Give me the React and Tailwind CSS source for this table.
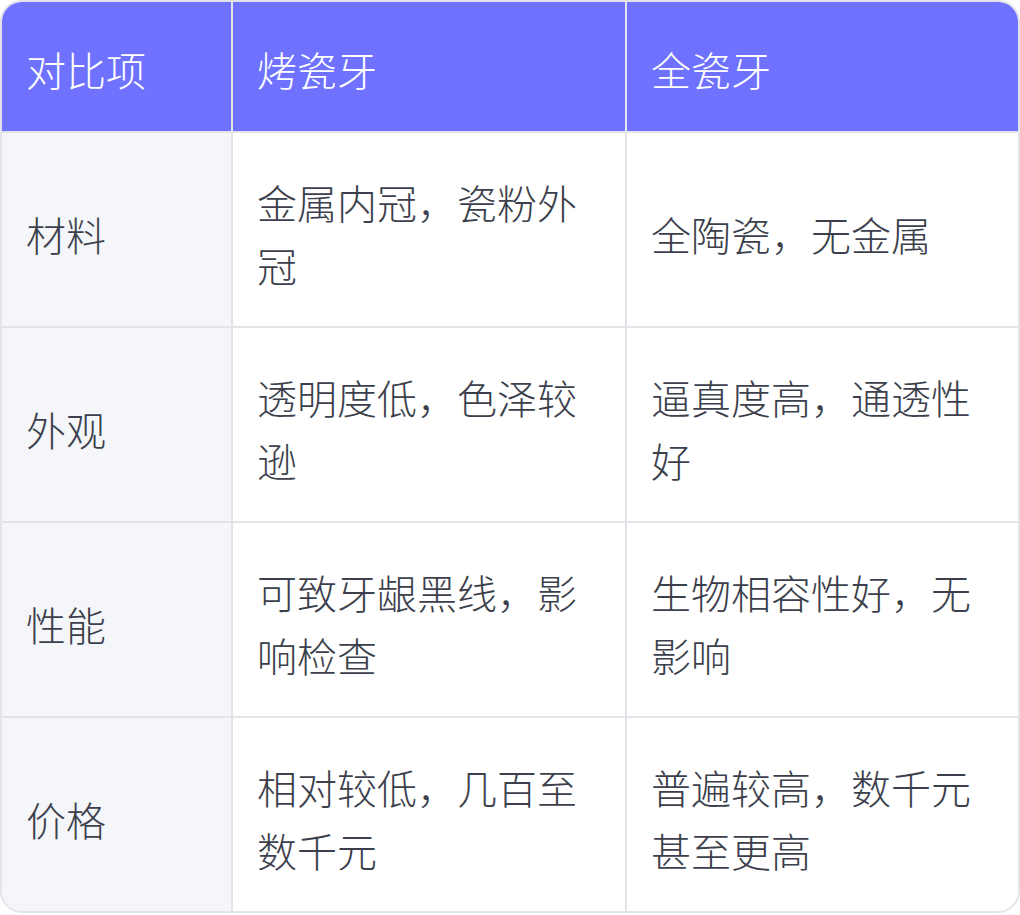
export default function App() {
  const rows = [
    ["材料", "金属内冠，瓷粉外冠", "全陶瓷，无金属"],
    ["外观", "透明度低，色泽较逊", "逼真度高，通透性好"],
    ["性能", "可致牙龈黑线，影响检查", "生物相容性好，无影响"],
    ["价格", "相对较低，几百至数千元", "普遍较高，数千元甚至更高"],
  ];
  const font = { fontFamily: '"Noto Sans CJK SC", "Noto Sans", sans-serif' };
  return (
    <div className="w-[1020px] h-[915px] bg-white" style={font}>
      <div className="w-[1020px] border-2 border-[#e3e4e9] rounded-[22px] overflow-hidden">
        <div className="grid grid-cols-[229px_392px_1fr] grid-rows-[129px_repeat(4,193px)] gap-[2px] bg-[#e3e4e9] text-[40px] leading-[63px] font-light">
          {["对比项", "烤瓷牙", "全瓷牙"].map((h) => (
            <div key={h} className="bg-[#6e72ff] text-white flex items-center px-6 pt-[5px]">
              {h}
            </div>
          ))}
          {rows.map((r) =>
            r.map((c, i) => (
              <div
                key={r[0] + i}
                className={`flex items-center px-6 pt-[9px] text-[#3c3f4c] ${i === 0 ? "bg-[#f5f6fa]" : "bg-white"}`}
              >
                <span>{c}</span>
              </div>
            ))
          )}
        </div>
      </div>
    </div>
  );
}
